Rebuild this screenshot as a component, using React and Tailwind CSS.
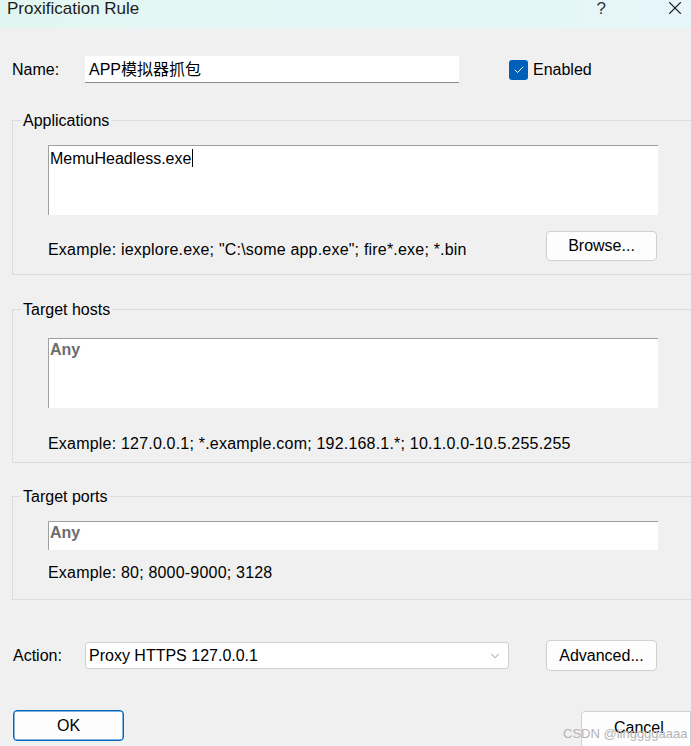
import { Check, ChevronDown, X } from 'lucide-react';

const font = { fontFamily: '"Liberation Sans", "Noto Sans CJK SC", sans-serif' };

// fieldset-like group box, its right edge runs off the window
function Group({ title, className, children }) {
    return (
        <div className={`relative ml-[12px] w-[700px] border border-[#dcdcdc] ${className}`}>
            <span className="absolute left-[8px] top-[-10px] bg-[#f0f0f0] px-[2px] text-[16px] leading-[20px] text-black">
                {title}
            </span>
            {children}
        </div>
    );
}

function Button({ children, className }) {
    return (
        <div className={`flex items-center justify-center rounded-[4px] border border-[#d0d0d0] bg-[#fdfdfd] text-[16px] text-black ${className}`}>
            {children}
        </div>
    );
}

export default function App() {
    return (
        <div className="relative h-[746px] w-[691px] overflow-hidden bg-[#f0f0f0]" style={font}>
            {/* Title bar */}
            <div className="flex h-[28px] items-start justify-between bg-gradient-to-r from-[#e2f6f1] to-[#e6f6fa]">
                <div className="mt-[-2px] pl-[7px] text-[17px] leading-[22px] text-[#1c1c1c]">Proxification Rule</div>
                <div className="flex items-start">
                    <span className="mt-[-2px] mr-[58px] text-[17px] leading-[22px] text-[#333]">?</span>
                    <X className="mr-[5px] mt-[-3px] h-[22px] w-[22px] text-[#222]" strokeWidth={1.2} />
                </div>
            </div>

            {/* Name row */}
            <div className="mt-[28px] flex h-[27px] items-center">
                <span className="ml-[12px] w-[73px] text-[16px] text-black">Name:</span>
                <div className="flex h-[27px] w-[374px] items-center border-b border-[#8a8a8a] bg-white pl-[4px] pt-[1px] text-[16px] text-black">
                    APP模拟器抓包
                </div>
                <div className="ml-[50px] flex h-[20px] w-[19px] items-center justify-center rounded-[3px] bg-[#005fb8]">
                    <Check className="h-[12px] w-[12px] text-white" strokeWidth={2} />
                </div>
                <span className="ml-[5px] text-[16px] text-black">Enabled</span>
            </div>

            {/* Applications */}
            <Group title="Applications" className="mt-[37px] h-[155px]">
                <div className="ml-[35px] mt-[24px] h-[70px] w-[610px] border-l border-t border-[#a0a0a0] bg-white pl-[1px] text-[16px] leading-[20px] text-black">
                    MemuHeadless.exe<span className="ml-[1px] inline-block h-[18px] w-[1px] translate-y-[3px] bg-black" />
                </div>
                <div className="mt-[15px] flex items-center">
                    <span className="ml-[35px] mt-[8px] w-[498px] text-[16px] tracking-[0.2px] text-black">
                        Example: iexplore.exe; "C:\some app.exe"; fire*.exe; *.bin
                    </span>
                    <Button className="h-[30px] w-[111px]">Browse...</Button>
                </div>
            </Group>

            {/* Target hosts */}
            <Group title="Target hosts" className="mt-[34px] h-[154px]">
                <div className="ml-[35px] mt-[28px] h-[70px] w-[610px] border-l border-t border-[#a0a0a0] bg-white pl-[1px] pt-[1px] text-[16px] font-bold leading-[20px] text-[#6d6d6d]">
                    Any
                </div>
                <div className="ml-[35px] mt-[24px] text-[16px] tracking-[0.2px] text-black">
                    Example: 127.0.0.1; *.example.com; 192.168.1.*; 10.1.0.0-10.5.255.255
                </div>
            </Group>

            {/* Target ports */}
            <Group title="Target ports" className="mt-[33px] h-[104px]">
                <div className="ml-[35px] mt-[24px] h-[29px] w-[610px] border-l border-t border-[#a0a0a0] bg-white pl-[1px] pt-[1px] text-[16px] font-bold leading-[20px] text-[#6d6d6d]">
                    Any
                </div>
                <div className="ml-[35px] mt-[11px] text-[16px] tracking-[0.2px] text-black">Example: 80; 8000-9000; 3128</div>
            </Group>

            {/* Action row */}
            <div className="mt-[40px] flex h-[31px] items-center">
                <span className="ml-[13px] w-[72px] text-[16px] text-black">Action:</span>
                <div className="flex h-[27px] w-[424px] items-center justify-between rounded-[3px] border border-[#d0d0d0] bg-white pl-[3px] pr-[6px] text-[16px] text-black">
                    Proxy HTTPS 127.0.0.1
                    <ChevronDown className="h-[14px] w-[14px] text-[#707070]" strokeWidth={1.2} />
                </div>
                <Button className="ml-[37px] h-[31px] w-[111px]">Advanced...</Button>
            </div>

            {/* Bottom buttons */}
            <div className="mt-[39px] flex items-start justify-between">
                <div className="ml-[13px] flex h-[31px] w-[111px] items-center justify-center rounded-[4px] border border-[#0067c0] bg-[#fdfdfd] text-[16px] text-black shadow-[inset_0_0_0_0.5px_#0067c0]">
                    OK
                </div>
                <div className="mt-[1px] h-[40px] w-[110px] rounded-l-[4px] border border-[#d0d0d0] bg-[#fdfdfd] pl-[32px] pt-[4px] text-[16px] text-black">
                    Cancel
                </div>
            </div>

            {/* watermark */}
            <div className="absolute left-[563px] top-[726px] text-[13px] leading-[16px] text-[#b4b4b4]" style={{ fontFamily: '"Liberation Sans", sans-serif' }}>
                CSDN @linggggaaaa
            </div>
        </div>
    );
}
